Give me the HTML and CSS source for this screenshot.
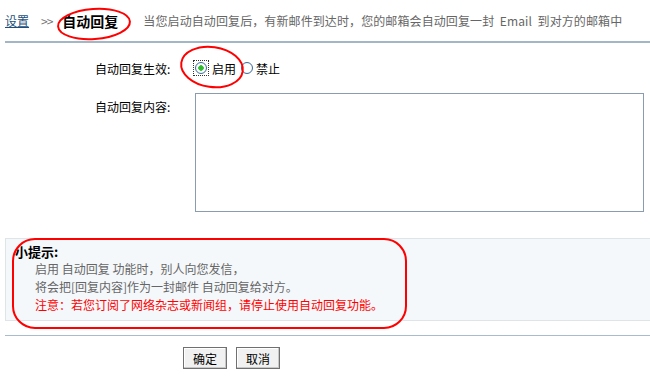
FILE: index.html
```html
<!DOCTYPE html>
<html lang="zh-CN">
<head>
  <meta charset="UTF-8" />
  <title>自动回复</title>
  <link rel="stylesheet" href="styles.css">
</head>
<body>

  <div class="page">
    <div class="header">
      <a href="#" class="crumb">设置</a>
      <span class="sep">&gt;&gt;</span>
      <span class="title">自动回复</span>
      <span class="desc">当您启动自动回复后，有新邮件到达时，您的邮箱会自动回复一封 &nbsp;Email&nbsp; 到对方的邮箱中</span>
    </div>

    <div class="form">
      <div class="row">
        <label class="label">自动回复生效:</label>
        <div class="field radios">
          <span class="focus"><input type="radio" name="enable" class="radio" checked></span>
          <span class="opt">启用</span>
          <input type="radio" name="enable" class="radio">
          <span class="opt">禁止</span>
        </div>
      </div>
      <div class="row row-text">
        <label class="label">自动回复内容:</label>
        <textarea class="content"></textarea>
      </div>
    </div>

    <div class="tips">
      <div class="tips-title">小提示:</div>
      <p>启用 自动回复 功能时，别人向您发信，</p>
      <p>将会把[回复内容]作为一封邮件 自动回复给对方。</p>
      <p class="warn">注意：若您订阅了网络杂志或新闻组，请停止使用自动回复功能。</p>
    </div>

    <div class="actions">
      <button class="btn">确定</button>
      <button class="btn">取消</button>
    </div>

    <!-- hand-drawn red marks over the screenshot -->
    <svg class="marks" width="650" height="376" viewBox="0 0 650 376">
      <ellipse cx="94" cy="24" rx="36" ry="15" transform="rotate(-4 94 24)" />
      <ellipse cx="212" cy="67" rx="31" ry="20" transform="rotate(8 212 67)" />
      <rect x="13" y="239" width="393" height="89" rx="22" ry="22" />
    </svg>
  </div>

</body>
</html>
```

FILE: styles.css
```css
body {
  margin: 0;
  font-family: "Noto Sans CJK SC", "DejaVu Sans", sans-serif;
  font-size: 12px;
  color: #000;
  background: #fff;
}

.page {
  position: relative;
  width: 650px;
  height: 376px;
  overflow: hidden;
}

.header {
  display: flex;
  align-items: center;
  height: 41px;
  margin-left: 5px;
  border-bottom: 2px solid #a2b6c6;
  white-space: nowrap;
}

.crumb {
  color: #1d4f7c;
  font-size: 12px;
  text-decoration: underline;
}

.sep {
  color: #777;
  margin: 0 10px 0 12px;
  letter-spacing: -1px;
}

.title {
  font-size: 14px;
  font-weight: bold;
  margin-right: 25px;
}

.desc {
  color: #666;
  font-size: 12px;
  letter-spacing: 0.1px;
}

.form {
  padding: 14px 0 0 95px;
}

.row {
  display: flex;
  align-items: center;
}

.label {
  width: 100px;
}

.radios {
  display: flex;
  align-items: center;
  height: 22px;
}

.focus {
  display: inline-flex;
  border: 1px dotted #333;
  padding: 1px;
  margin-left: -2px;
}

.radio {
  appearance: none;
  width: 12px;
  height: 12px;
  margin: 0;
  border: 1px solid #3d6b9c;
  border-radius: 50%;
  background: radial-gradient(circle, #fff 55%, #dfe6ee);
}

.radio:checked {
  background: radial-gradient(circle, #29b529 0, #35c235 2.5px, #fff 3px, #fff 55%, #dfe6ee);
}

.opt {
  margin: 0 5px 0 3px;
}

.row-text {
  align-items: flex-start;
  margin-top: 14px;
}

.row-text .label {
  padding-top: 5px;
}

.content {
  width: 447px;
  height: 117px;
  margin: 0;
  padding: 0;
  border: 1px solid #8a9cae;
  resize: none;
}

.tips {
  margin: 26px 0 0 5px;
  padding: 5px 0 0 9px;
  box-sizing: border-box;
  height: 83px;
  background: #f5f8fb;
  border: 1px solid #dfe4e8;
  border-right: none;
}

.tips-title {
  font-size: 13px;
  font-weight: bold;
  line-height: 16px;
}

.tips p {
  margin: 0 0 0 20px;
  color: #666;
  line-height: 18px;
}

.tips p.warn {
  color: #f00;
}

.actions {
  display: flex;
  gap: 9px;
  margin: 14px 0 0 5px;
  padding: 11px 0 0 178px;
  border-top: 1px solid #a8bccb;
}

.btn {
  width: 44px;
  height: 22px;
  padding: 0;
  font-family: inherit;
  font-size: 12px;
  background: #f1f1f1;
  border: 1px solid #707070;
  border-radius: 0;
  box-shadow: inset -1px -1px 0 #c8c8c8, inset 1px 1px 0 #fff;
}

.marks {
  position: absolute;
  left: 0;
  top: 0;
  pointer-events: none;
}

.marks ellipse,
.marks rect {
  fill: none;
  stroke: #f00;
  stroke-width: 2;
}
```
